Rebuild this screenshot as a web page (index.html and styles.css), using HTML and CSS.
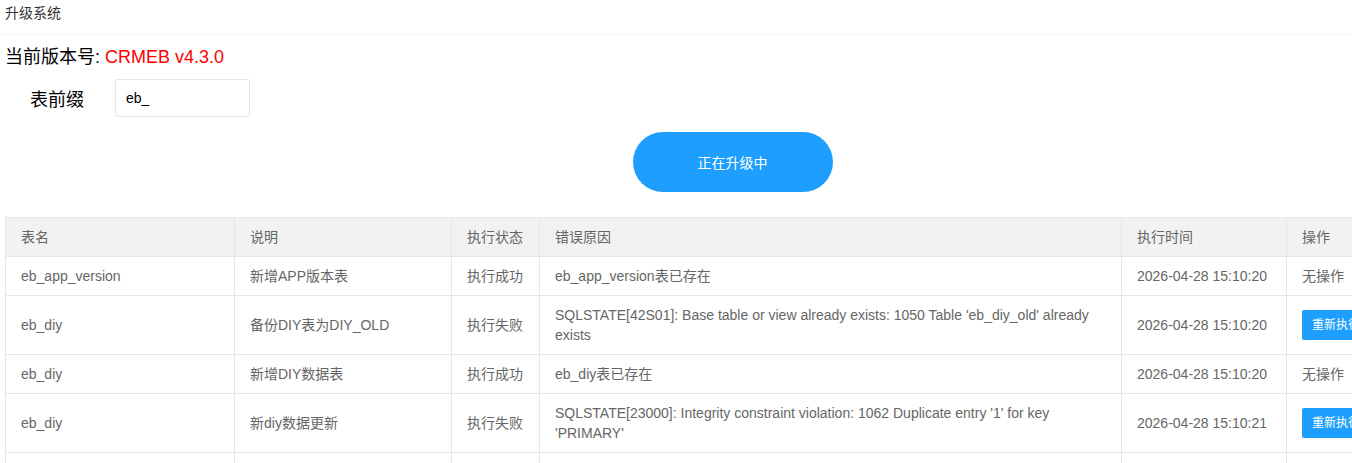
FILE: index.html
```html
<!DOCTYPE html>
<html lang="zh-CN">
<head>
<meta charset="utf-8">
<title>升级系统</title>
<link rel="stylesheet" href="styles.css">
</head>
<body>
<div class="page">
  <div class="header">升级系统</div>
  <div class="content">
    <div class="version">当前版本号: <span class="ver-num">CRMEB v4.3.0</span></div>
    <div class="form-row">
      <label class="form-label">表前缀</label>
      <input class="form-input" type="text" value="eb_">
    </div>
    <div class="btn-row">
      <button class="btn-main" type="button">正在升级中</button>
    </div>
    <table class="tbl">
      <colgroup>
        <col class="c1"><col class="c2"><col class="c3"><col class="c4"><col class="c5"><col class="c6">
      </colgroup>
      <thead>
        <tr><th>表名</th><th>说明</th><th>执行状态</th><th>错误原因</th><th>执行时间</th><th>操作</th></tr>
      </thead>
      <tbody>
        <tr><td>eb_app_version</td><td>新增APP版本表</td><td>执行成功</td><td>eb_app_version表已存在</td><td>2026-04-28 15:10:20</td><td>无操作</td></tr>
        <tr><td>eb_diy</td><td>备份DIY表为DIY_OLD</td><td>执行失败</td><td>SQLSTATE[42S01]: Base table or view already exists: 1050 Table 'eb_diy_old' already exists</td><td>2026-04-28 15:10:20</td><td><button class="btn-sm" type="button">重新执行</button></td></tr>
        <tr><td>eb_diy</td><td>新增DIY数据表</td><td>执行成功</td><td>eb_diy表已存在</td><td>2026-04-28 15:10:20</td><td>无操作</td></tr>
        <tr><td>eb_diy</td><td>新diy数据更新</td><td>执行失败</td><td>SQLSTATE[23000]: Integrity constraint violation: 1062 Duplicate entry '1' for key 'PRIMARY'</td><td>2026-04-28 15:10:21</td><td><button class="btn-sm" type="button">重新执行</button></td></tr>
        <tr><td>eb_diy</td><td>新增DIY数据</td><td>执行成功</td><td>数据已存在</td><td>2026-04-28 15:10:21</td><td>无操作</td></tr>
      </tbody>
    </table>
  </div>
</div>
</body>
</html>
```
FILE: styles.css
```css
html, body {
  margin: 0;
  padding: 0;
  background: #fff;
  overflow: hidden;
}
body {
  font-family: "Liberation Sans", Arial, "Noto Sans CJK SC", sans-serif;
  color: #333;
  font-size: 14px;
}
.page {
  width: 1465px;
}
.header {
  height: 34px;
  line-height: 26px;
  padding: 0 5px;
  font-size: 14px;
  color: #333;
  border-bottom: 1px solid #f6f6f6;
}
.content {
  padding: 0 5px;
}
.version {
  margin-top: 10px;
  font-size: 18px;
  line-height: 24px;
  color: #000;
}
.ver-num {
  color: #ff0000;
}
.form-row {
  display: flex;
  align-items: center;
  margin-top: 10px;
  height: 38px;
}
.form-label {
  width: 110px;
  text-align: center;
  font-size: 18px;
  color: #000;
  padding-right: 6px;
  box-sizing: border-box;
}
.form-input {
  width: 135px;
  height: 38px;
  box-sizing: border-box;
  border: 1px solid #e6e6e6;
  border-radius: 2px;
  padding: 0 10px;
  font-family: "Liberation Sans", Arial, "Noto Sans CJK SC", sans-serif;
  font-size: 14px;
  color: #000;
  background: #fff;
  outline: none;
}
.btn-row {
  display: flex;
  justify-content: center;
  margin-top: 15px;
}
.btn-main {
  width: 200px;
  height: 60px;
  border: 0;
  border-radius: 30px;
  background: #1e9fff;
  color: #fff;
  font-family: "Liberation Sans", Arial, "Noto Sans CJK SC", sans-serif;
  font-size: 14px;
  padding: 0;
}
.tbl {
  margin-top: 25px;
  width: 1455px;
  table-layout: fixed;
  border-collapse: collapse;
  color: #666;
}
.c1 { width: 229px; }
.c2 { width: 217px; }
.c3 { width: 88px; }
.c4 { width: 582px; }
.c5 { width: 165px; }
.c6 { width: 174px; }
.tbl th, .tbl td {
  border: 1px solid #e6e6e6;
  padding: 9px 15px;
  line-height: 20px;
  font-size: 14px;
  text-align: left;
  font-weight: normal;
  vertical-align: middle;
}
.tbl th {
  background: #f2f2f2;
}
.btn-sm {
  height: 30px;
  line-height: 30px;
  padding: 0 10px;
  border: 0;
  border-radius: 2px;
  background: #1e9fff;
  color: #fff;
  font-family: "Liberation Sans", Arial, "Noto Sans CJK SC", sans-serif;
  font-size: 12px;
  white-space: nowrap;
  display: block;
}
```
